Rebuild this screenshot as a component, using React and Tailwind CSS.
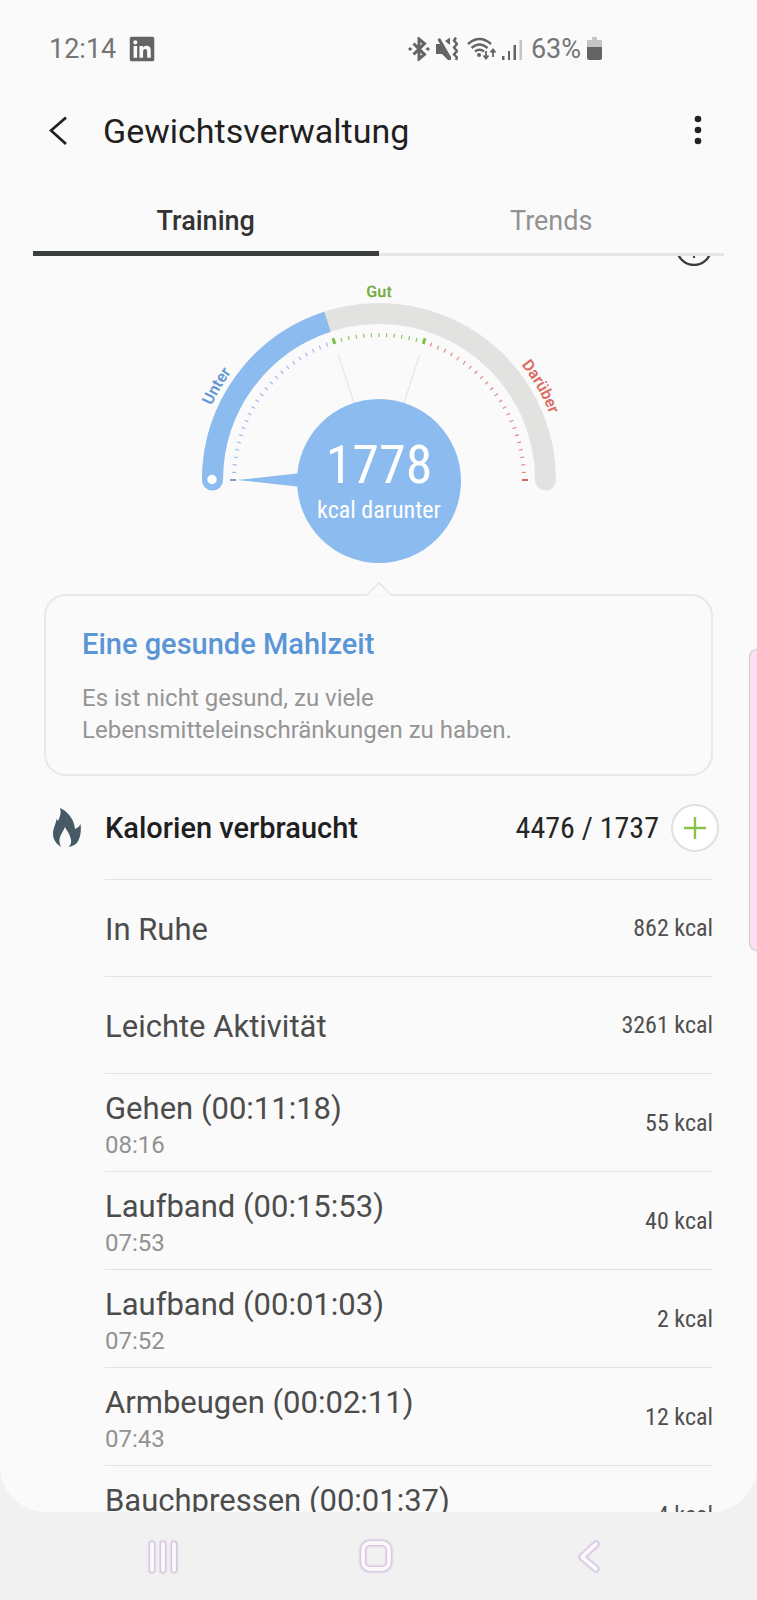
import React, { useState } from 'react';
import { FaLinkedin } from 'react-icons/fa';

const activities = [
  { id: 1, name: 'In Ruhe', kcal: 862 },
  { id: 2, name: 'Leichte Aktivität', kcal: 3261 },
  { id: 3, name: 'Gehen (00:11:18)', time: '08:16', kcal: 55 },
  { id: 4, name: 'Laufband (00:15:53)', time: '07:53', kcal: 40 },
  { id: 5, name: 'Laufband (00:01:03)', time: '07:52', kcal: 2 },
  { id: 6, name: 'Armbeugen (00:02:11)', time: '07:43', kcal: 12 },
  { id: 7, name: 'Bauchpressen (00:01:37)', time: '07:41', kcal: 4 },
];

const tabs = ['Training', 'Trends'];

const condensed = "font-['Roboto_Condensed','Roboto',sans-serif]";

function StatusBar() {
  return (
    <div className="flex h-24 items-center pl-[49px] pr-[155px] pt-[2px] text-[27px] leading-8 text-[#757575]">
      <span>12:14</span>
      <FaLinkedin className="ml-3 size-7 text-[#646464]" />
      <div className="ml-auto flex items-center">
        <svg viewBox="0 0 22 24" className="h-6 w-[22px]" fill="#646464">
          <path d="M5.500 6.500l11 11-5.500 4.500V2l5.500 4.500-11 11" fill="none" stroke="#646464" strokeWidth="3" />
          <path d="M0 12l2-2 2.500 2L2 14zM17.500 12l2.500-2 2 2-2 2z" />
        </svg>
        <svg viewBox="0 0 22 24" className="ml-[6px] h-6 w-[22px]" fill="#646464">
          <path d="M0 7h4L1.500 2.500 4 1l11 19v3h-3l-6-6H0zM9 4l5-3.500V8z" />
          <path d="M20 0.500l-2 3 3 3.500-3 3.500 3 3.500-3 3.500 3 3-1 2.500" fill="none" stroke="#646464" strokeWidth="2.400" />
        </svg>
        <svg viewBox="0 0 30 24" className="ml-[9px] h-6 w-[30px]" fill="none" stroke="#646464" strokeWidth="2.400">
          <path d="M1 7Q12.500-3 24 7M4.500 11Q12.500 4 20.500 11M8 14.500Q12.500 11 17 14.500" />
          <circle cx="12" cy="18" r="2" fill="#646464" stroke="none" />
          <path d="M19 14v7M16.500 18.500l2.500 3 2.500-3M26 20v-7M23.500 15.500l2.500-3 2.500 3" strokeWidth="1.800" />
        </svg>
        <svg viewBox="0 0 20 24" className="ml-[5px] h-6 w-5" fill="#646464">
          <path d="M0 19h2.500v4H0zM6 14h2v9H6zM11.500 8H14v15h-2.500z" />
          <path d="M17.500 3H20v20h-2.500z" fill="#c4c4c4" />
        </svg>
        <span className="ml-[9px]">63%</span>
        <svg viewBox="0 0 15 24" className="ml-[6px] h-6 w-[15px]">
          <path d="M5 0h5v3h5v8H0V3h5z" fill="#c4c4c4" />
          <path d="M0 10h15v11a2 2 0 0 1-2 2H2a2 2 0 0 1-2-2z" fill="#646464" />
        </svg>
      </div>
    </div>
  );
}

function Gauge() {
  const ticks = Array.from({ length: 61 }, (_, i) => i * 3 - 90);

  const tickColor = (deg) => {
    if (deg < -18) return '#9dbce8';
    if (deg > 18) return '#e08a88';
    return '#8fc65c';
  };

  return (
    <svg viewBox="0 0 380 300" className="mx-auto mt-[15px] block h-[300px] w-[380px]">
      <defs>
        <path id="labels" d="M7 209A183 183 0 0 1 373 209" />
      </defs>
      <path d="M23.500 209A166.500 166.500 0 0 1 356.500 209" fill="none" stroke="#e2e3e1" strokeWidth="21" strokeLinecap="round" />
      <path d="M138.500 50.700A166.500 166.500 0 0 0 23.500 209" fill="none" stroke="#8cbbef" strokeWidth="21" />
      <circle cx="23.500" cy="209" r="10.500" fill="#8cbbef" />
      <circle cx="23" cy="208.500" r="4.700" fill="#fff" />

      {ticks.map((deg) => {
        const major = deg === -90 || deg === 90 || deg === -18 || deg === 18;
        return (
          <line
            key={deg}
            x1="190"
            x2="190"
            y1={major ? 60 : 62}
            y2="66"
            transform={`rotate(${deg} 190 209)`}
            stroke={deg === 90 ? '#cf6a68' : deg === -90 ? '#7d9cc6' : major ? '#7fbf42' : tickColor(deg)}
            strokeWidth={major ? (Math.abs(deg) === 18 ? 3 : 2) : 1.2}
          />
        );
      })}

      <path d="M190 77v60" stroke="#e3e3e3" transform="rotate(-18 190 209)" />
      <path d="M190 77v60" stroke="#e3e3e3" transform="rotate(18 190 209)" />
      <path d="M48 209L112 202v14z" fill="#8cbbef" />
      <circle cx="190" cy="210" r="82" fill="#8cbbef" />

      <g fontSize="16" fontWeight="600" textAnchor="middle">
        <text fill="#6297d3">
          <textPath href="#labels" startOffset="16.7%">Unter</textPath>
        </text>
        <text fill="#76ad45">
          <textPath href="#labels" startOffset="50%">Gut</textPath>
        </text>
        <text fill="#dc6b67">
          <textPath href="#labels" startOffset="83.3%">Darüber</textPath>
        </text>
      </g>
      <g fill="#fff" textAnchor="middle" className={condensed}>
        <text x="190" y="212" fontSize="54">1778</text>
        <text x="190" y="247" fontSize="24">kcal darunter</text>
      </g>
    </svg>
  );
}

function ActivityRow({ activity }) {
  return (
    <li
      className={`flex shrink-0 items-center justify-between border-t border-[#e2e2e2] ${
        activity.time ? 'h-[98px]' : 'h-[97px]'
      }`}
    >
      <div className="pt-1">
        <p className="text-[31px] leading-10 text-[#4c4c4c]">{activity.name}</p>
        {activity.time && <p className="text-2xl leading-8 text-[#929292]">{activity.time}</p>}
      </div>
      <span className={`text-2xl text-[#4f4f4f] ${condensed}`}>{activity.kcal} kcal</span>
    </li>
  );
}

// white glyph with a soft violet rim, used by the system navigation bar
function NavGlyph({ d }) {
  return (
    <svg viewBox="0 0 40 40" className="size-10" fill="none" strokeLinecap="round" strokeLinejoin="round">
      <path d={d} stroke="#e9e2ec" strokeWidth="9" />
      <path d={d} stroke="#d6c8dd" strokeWidth="6.500" />
      <path d={d} stroke="#fcf8fe" strokeWidth="3.800" />
    </svg>
  );
}

export default function App() {
  const [tab, setTab] = useState('Training');

  return (
    <div className="flex h-screen flex-col overflow-hidden bg-[#f1f1f1] font-['Roboto',sans-serif]">
      <div className="flex min-h-0 flex-1 flex-col overflow-hidden rounded-b-[46px] bg-[#fafafa]">
        <StatusBar />

        <header className="flex h-[70px] shrink-0 items-center pl-[49px] pr-[51px]">
          <button type="button" aria-label="Zurück">
            <svg viewBox="0 0 18 30" className="h-[30px] w-[18px]" fill="none" stroke="#222" strokeWidth="2.800">
              <path d="M17 1.500L2 14.500l15 13.500" />
            </svg>
          </button>
          <h1 className="ml-9 text-[34px] leading-10 text-[#1f1f1f]">Gewichtsverwaltung</h1>
          <button type="button" aria-label="Weitere Optionen" className="ml-auto">
            <svg viewBox="0 0 16 32" className="h-8 w-4" fill="#222">
              <circle cx="8" cy="4" r="3.300" />
              <circle cx="8" cy="15" r="3.300" />
              <circle cx="8" cy="26" r="3.300" />
            </svg>
          </button>
        </header>

        <nav className="mx-[33px] mt-[18px] flex h-[72px] shrink-0">
          {tabs.map((name) => (
            <button
              key={name}
              type="button"
              onClick={() => setTab(name)}
              className={`flex-1 text-[27px] leading-8 ${
                tab === name
                  ? 'border-b-[5px] border-[#3a3e3d] pt-[6px] font-medium text-[#333]'
                  : 'border-b-[3px] border-[#e6e6e6] pt-1 text-[#929292]'
              }`}
            >
              {name}
            </button>
          ))}
        </nav>

        <main className="relative flex min-h-0 flex-1 flex-col overflow-hidden">
          <button type="button" aria-label="Info" className="absolute -top-[26px] right-[45px]">
            <svg viewBox="0 0 36 36" className="size-9" fill="none" stroke="#3c3c3c" strokeWidth="2.400">
              <circle cx="18" cy="18" r="17" />
              <path d="M18 16v12M18 9v3" strokeWidth="2" />
            </svg>
          </button>

          <section className="shrink-0">
            <Gauge />
          </section>

          <section className="relative mx-11 mt-[23px] shrink-0 rounded-[22px] border-2 border-[#e8e8e8] px-9 pb-7 pt-7">
            <svg viewBox="0 0 28 16" className="absolute -top-[15px] left-1/2 h-4 w-7 -translate-x-1/2" fill="#fafafa">
              <path d="M1 14.500h26V16H1z" />
              <path d="M0 14.500h1L14 2l13 12.500h1" stroke="#e8e8e8" strokeWidth="1.700" />
            </svg>
            <h2 className="text-[29px] font-medium leading-10 text-[#5a95d6]">Eine gesunde Mahlzeit</h2>
            <p className="mt-[18px] text-2xl leading-8 text-[#959595]">
              Es ist nicht gesund, zu viele Lebensmitteleinschränkungen zu haben.
            </p>
          </section>

          <section className="shrink-0">
            <div className="flex h-[103px] items-center pl-[53px] pr-[38px]">
              <svg viewBox="0 0 28 39" className="h-[39px] w-7" fill="#455a64">
                <path d="M7 0C12 2 17 7 19.500 12c1.500 3 2 6 2.500 9 3-1 4.500-3 5.500-5 1 6 0 14-3 18-2 3-5 4-9 5 2-2 3-4 2.500-7-1-6-4-9-6-13-1.500 4-5 8-5.500 12-.4 3 .5 6 2 8C3 36 0 31 0 26c0-6 3-10 3.500-15L5 13c2-4 3.500-8 2-13z" />
              </svg>
              <h2 className="ml-6 text-[29px] font-medium leading-10 text-[#1f1f1f]">Kalorien verbraucht</h2>
              <span className={`ml-auto text-[30px] text-[#262626] ${condensed}`}>4476 / 1737</span>
              <button
                type="button"
                aria-label="Hinzufügen"
                className="ml-3 flex size-12 items-center justify-center rounded-full border-2 border-[#e0e0e0] bg-white"
              >
                <svg viewBox="0 0 24 24" className="size-6" stroke="#8bc34a" strokeWidth="2.400">
                  <path d="M12 1v22M1 12h22" />
                </svg>
              </button>
            </div>
            <ul className="ml-[105px] mr-11">
              {activities.map((activity) => (
                <ActivityRow key={activity.id} activity={activity} />
              ))}
            </ul>
          </section>
        </main>
      </div>

      <nav className="flex h-[88px] shrink-0 items-center justify-around pl-[57px] pr-[62px]">
        <button type="button" aria-label="Letzte Apps">
          <NavGlyph d="M9 8v26M20 8v26M31 8v26" />
        </button>
        <button type="button" aria-label="Startseite">
          <NavGlyph d="M14 7h12a7 7 0 0 1 7 7v12a7 7 0 0 1-7 7H14a7 7 0 0 1-7-7V14a7 7 0 0 1 7-7z" />
        </button>
        <button type="button" aria-label="Zurück">
          <NavGlyph d="M27 8L13 21l14 12" />
        </button>
      </nav>

      <div className="absolute right-0 top-[649px] h-[302px] w-2 rounded-l-lg border-y border-l border-[#d8c4d0] bg-[#fae0f1]" />
    </div>
  );
}
